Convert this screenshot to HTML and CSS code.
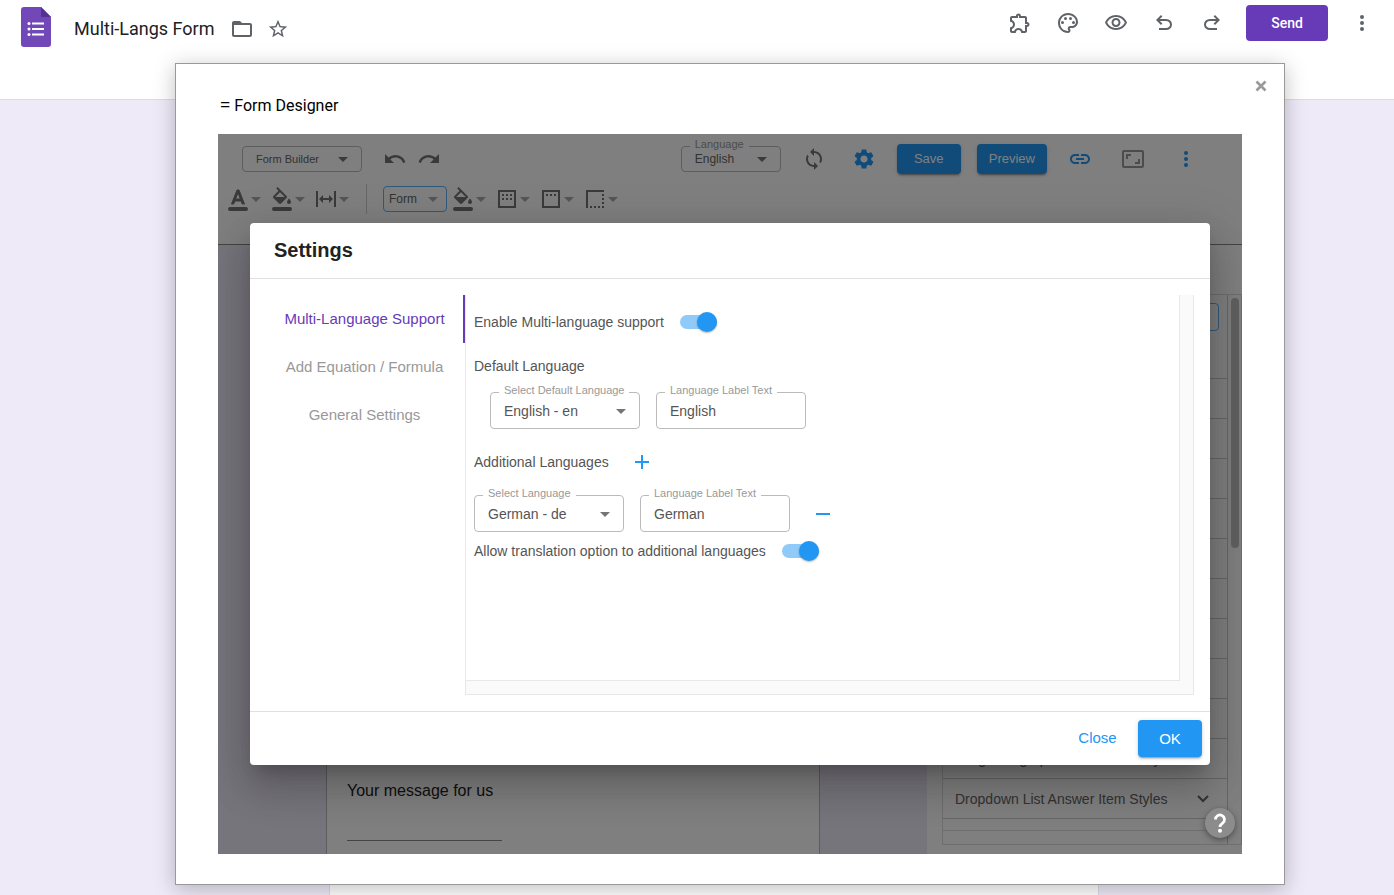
FILE: index.html
```
<!DOCTYPE html>
<html lang="en">
<head>
<meta charset="utf-8">
<title>Multi-Langs Form</title>
<link rel="stylesheet" href="styles.css">
</head>
<body>
<div class="page">
  <header class="topbar">
    <div class="topbar-left">
      <svg class="logo" width="30" height="40" viewBox="0 0 30 40"><path fill="#7248b9" d="M3 0h17l10 10v27a3 3 0 0 1-3 3H3a3 3 0 0 1-3-3V3a3 3 0 0 1 3-3z"/><path fill="#54318e" d="M20 0l10 10H20z"/><g fill="#fff"><circle cx="8" cy="16.500" r="1.500"/><circle cx="8" cy="22" r="1.500"/><circle cx="8" cy="27.500" r="1.500"/><path d="M11 15.500h12v2H11zM11 21h12v2H11zM11 26.500h12v2H11z"/></g></svg>
      <h1 class="doc-title">Multi-Langs Form</h1>
      <button class="plain title-icon" aria-label="Move to folder"><svg width="24" height="24" viewBox="0 0 24 24"><path d="M10 4H4c-1.100 0-2 .9-2 2v12c0 1.100.9 2 2 2h16c1.100 0 2-.9 2-2V8c0-1.100-.9-2-2-2h-8l-2-2zM4 8h16v10H4z" fill-rule="evenodd"/></svg></button>
      <button class="plain title-icon" aria-label="Star"><svg width="22" height="22" viewBox="0 0 24 24"><path d="M22 9.240l-7.190-.62L12 2 9.190 8.630 2 9.240l5.460 4.730L5.820 21 12 17.270 18.180 21l-1.630-7.030L22 9.240zM12 15.400l-3.760 2.270 1-4.280-3.320-2.880 4.380-.38L12 6.100l1.710 4.040 4.380.38-3.320 2.880 1 4.280L12 15.400z"/></svg></button>
    </div>
    <div class="topbar-right">
      <button class="plain top-icon" aria-label="Add-ons"><svg width="24" height="24" viewBox="0 0 24 24"><path d="M10.5 4.5c.28 0 .5.22.5.5v2h6v6h2c.28 0 .5.22.5.5s-.22.5-.5.5h-2v6h-2.120c-.68-1.750-2.390-3-4.380-3s-3.700 1.250-4.380 3H4v-2.120c1.750-.68 3-2.390 3-4.380 0-1.990-1.240-3.700-2.990-4.380L4 7h6V5c0-.28.22-.5.5-.5m0-2C9.120 2.500 8 3.620 8 5H4c-1.100 0-1.990.9-1.990 2v3.800h.29c1.490 0 2.700 1.210 2.700 2.700s-1.210 2.700-2.700 2.700H2V20c0 1.100.9 2 2 2h3.800v-.3c0-1.490 1.210-2.700 2.700-2.700s2.700 1.210 2.700 2.700v.3H17c1.100 0 2-.9 2-2v-4c1.380 0 2.500-1.120 2.500-2.500S20.380 11 19 11V7c0-1.100-.9-2-2-2h-4c0-1.380-1.120-2.500-2.500-2.500z"/></svg></button>
      <button class="plain top-icon" aria-label="Customize theme"><svg width="24" height="24" viewBox="0 0 24 24"><path d="M12 22C6.490 22 2 17.510 2 12S6.490 2 12 2s10 4.040 10 9c0 3.310-2.690 6-6 6h-1.770c-.28 0-.5.22-.5.5 0 .12.05.23.13.33.41.47.64 1.060.64 1.670 0 1.380-1.120 2.500-2.500 2.500zm0-18c-4.410 0-8 3.590-8 8s3.590 8 8 8c.28 0 .5-.22.5-.5 0-.16-.08-.28-.14-.35-.41-.46-.63-1.050-.63-1.650 0-1.380 1.120-2.500 2.500-2.500H16c2.210 0 4-1.790 4-4 0-3.860-3.590-7-8-7z"/><circle cx="6.500" cy="11.500" r="1.500"/><circle cx="9.500" cy="7.500" r="1.500"/><circle cx="14.500" cy="7.500" r="1.500"/><circle cx="17.500" cy="11.500" r="1.500"/></svg></button>
      <button class="plain top-icon" aria-label="Preview form"><svg width="24" height="24" viewBox="0 0 24 24"><path d="M12 6c3.790 0 7.170 2.130 8.820 5.500C19.170 14.870 15.790 17 12 17s-7.170-2.130-8.820-5.500C4.830 8.130 8.210 6 12 6m0-2C7 4 2.730 7.110 1 11.500 2.730 15.890 7 19 12 19s9.270-3.110 11-7.500C21.270 7.110 17 4 12 4zm0 5c1.380 0 2.500 1.120 2.500 2.500S13.380 14 12 14s-2.500-1.120-2.500-2.500S10.620 9 12 9m0-2c-2.480 0-4.500 2.020-4.500 4.500S9.520 16 12 16s4.500-2.020 4.500-4.500S14.480 7 12 7z"/></svg></button>
      <button class="plain top-icon" aria-label="Undo"><svg width="24" height="24" viewBox="0 0 24 24"><path d="M7 19v-2h7.100q1.575 0 2.738-1T18 13.500t-1.162-2.500T14.100 10H7.800l2.600 2.600L9 14 4 9l5-5 1.400 1.400L7.800 8h6.300q2.425 0 4.163 1.575T20 13.500t-1.737 3.925T14.100 19z"/></svg></button>
      <button class="plain top-icon" aria-label="Redo"><svg width="24" height="24" viewBox="0 0 24 24"><path transform="translate(24 0) scale(-1 1)" d="M7 19v-2h7.100q1.575 0 2.738-1T18 13.500t-1.162-2.500T14.100 10H7.800l2.600 2.600L9 14 4 9l5-5 1.400 1.400L7.800 8h6.300q2.425 0 4.163 1.575T20 13.500t-1.737 3.925T14.100 19z"/></svg></button>
      <button class="send">Send</button>
      <button class="plain top-icon" aria-label="More"><svg width="24" height="24" viewBox="0 0 24 24"><circle cx="12" cy="6" r="2"/><circle cx="12" cy="12" r="2"/><circle cx="12" cy="18" r="2"/></svg></button>
    </div>
  </header>
  <main class="form-area"><div class="form-sheet"></div></main>
</div>

<div class="overlay">
  <section class="window" aria-label="Form Designer">
    <div class="window-head">
      <h2 class="window-title"><span class="equals">=</span> Form Designer</h2>
      <button class="plain window-close" aria-label="Close window"><svg width="12" height="12" viewBox="0 0 12 12"><path d="M1.500 1.500l9 9M10.500 1.500l-9 9" stroke="#999" stroke-width="2.600"/></svg></button>
    </div>
    <div class="app">
      <div class="toolbar">
        <div class="tool-row main-row">
          <div class="select-box builder">
            <select aria-label="Mode"><option>Form Builder</option></select>
            <svg class="caret" width="10" height="5" viewBox="0 0 10 5"><path d="M0 0h10L5 5z"/></svg>
          </div>
          <div class="history">
            <button class="plain hist" aria-label="Undo"><svg width="24" height="24" viewBox="0 0 24 24"><path d="M12.500 8c-2.650 0-5.050.99-6.900 2.600L2 7v9h9l-3.620-3.620c1.390-1.160 3.160-1.880 5.120-1.880 3.540 0 6.550 2.310 7.600 5.500l2.370-.78C21.080 11.030 17.150 8 12.500 8z"/></svg></button>
            <button class="plain hist" aria-label="Redo"><svg width="24" height="24" viewBox="0 0 24 24"><path d="M18.400 10.600C16.550 8.990 14.150 8 11.500 8c-4.650 0-8.580 3.030-9.960 7.220L3.900 16c1.050-3.190 4.050-5.500 7.600-5.500 1.950 0 3.730.72 5.120 1.880L13 16h9V7l-3.600 3.600z"/></svg></button>
          </div>
          <div class="actions">
            <div class="select-box lang">
              <label class="float" for="lang">Language</label>
              <select id="lang"><option>English</option></select>
              <svg class="caret" width="10" height="5" viewBox="0 0 10 5"><path d="M0 0h10L5 5z"/></svg>
            </div>
            <button class="plain act" aria-label="Sync"><svg width="24" height="24" viewBox="0 0 24 24"><path d="M12 4V1L8 5l4 4V6c3.310 0 6 2.690 6 6 0 1.010-.25 1.970-.7 2.800l1.460 1.460C19.540 15.030 20 13.570 20 12c0-4.420-3.580-8-8-8zm0 14c-3.310 0-6-2.690-6-6 0-1.010.25-1.970.7-2.800L5.240 7.740C4.460 8.970 4 10.430 4 12c0 4.420 3.580 8 8 8v3l4-4-4-4v3z"/></svg></button>
            <button class="plain act blue" aria-label="Settings"><svg width="24" height="24" viewBox="0 0 24 24"><path d="M19.140 12.940c.04-.3.06-.61.06-.94 0-.32-.02-.64-.07-.94l2.030-1.580c.18-.14.23-.41.12-.61l-1.920-3.320c-.12-.22-.37-.29-.59-.22l-2.390.96c-.5-.38-1.030-.7-1.620-.94l-.36-2.540c-.04-.24-.24-.41-.48-.41h-3.840c-.24 0-.43.17-.47.41l-.36 2.540c-.59.24-1.130.57-1.620.94l-2.390-.96c-.22-.08-.47 0-.59.22L2.740 8.870c-.12.21-.08.47.12.61l2.030 1.580c-.05.3-.09.63-.09.94s.02.64.07.94l-2.030 1.580c-.18.14-.23.41-.12.61l1.920 3.320c.12.22.37.29.59.22l2.390-.96c.5.38 1.030.7 1.620.94l.36 2.540c.05.24.24.41.48.41h3.840c.24 0 .44-.17.47-.41l.36-2.540c.59-.24 1.130-.56 1.620-.94l2.390.96c.22.08.47 0 .59-.22l1.920-3.320c.12-.22.07-.47-.12-.61l-2.010-1.580zM12 15.600c-1.980 0-3.600-1.620-3.600-3.600s1.620-3.600 3.600-3.600 3.600 1.620 3.600 3.600-1.620 3.600-3.600 3.600z"/></svg></button>
            <button class="filled tool">Save</button>
            <button class="filled tool">Preview</button>
            <button class="plain act blue" aria-label="Link"><svg width="24" height="24" viewBox="0 0 24 24"><path d="M3.900 12c0-1.710 1.390-3.100 3.100-3.100h4V7H7c-2.760 0-5 2.240-5 5s2.240 5 5 5h4v-1.900H7c-1.710 0-3.100-1.390-3.100-3.100zM8 13h8v-2H8v2zm9-6h-4v1.900h4c1.710 0 3.100 1.390 3.100 3.100s-1.390 3.100-3.100 3.100h-4V17h4c2.760 0 5-2.240 5-5s-2.240-5-5-5z"/></svg></button>
            <button class="plain act wide" aria-label="Resize"><svg width="24" height="24" viewBox="0 0 24 24"><path d="M19 12h-2v3h-3v2h5v-5zM7 9h3V7H5v5h2V9zm14-6H3c-1.100 0-2 .9-2 2v14c0 1.100.9 2 2 2h18c1.100 0 2-.9 2-2V5c0-1.100-.9-2-2-2zm0 16.010H3V4.990h18v14.020z"/></svg></button>
            <button class="plain act blue" aria-label="More options"><svg width="24" height="24" viewBox="0 0 24 24"><circle cx="12" cy="6" r="2"/><circle cx="12" cy="12" r="2"/><circle cx="12" cy="18" r="2"/></svg></button>
          </div>
        </div>
        <div class="tool-row style-row">
          <button class="plain drop" aria-label="Text color"><svg width="24" height="24" viewBox="0 0 24 24"><path class="heavy" d="M11 3L5.500 17h2.250l1.120-3h6.250l1.120 3h2.250L13 3h-2zm-1.380 9L12 5.670 14.380 12H9.620z"/><rect x="2" y="20" width="20" height="4" rx="2"/></svg><svg class="mini" width="10" height="5" viewBox="0 0 10 5"><path d="M0 0h10L5 5z"/></svg></button>
          <button class="plain drop" aria-label="Background color"><svg width="24" height="24" viewBox="0 0 24 24"><path d="M16.560 8.940L7.620 0 6.210 1.410l2.380 2.380-5.150 5.150c-.59.59-.59 1.540 0 2.120l5.500 5.500c.29.29.68.44 1.060.44s.77-.15 1.060-.44l5.500-5.500c.59-.58.59-1.530 0-2.120zM5.210 10L10 5.210 14.790 10H5.210zM19 11.500s-2 2.170-2 3.500c0 1.100.9 2 2 2s2-.9 2-2c0-1.330-2-3.500-2-3.500z"/><rect x="2" y="20" width="20" height="4" rx="2"/></svg><svg class="mini" width="10" height="5" viewBox="0 0 10 5"><path d="M0 0h10L5 5z"/></svg></button>
          <button class="plain drop" aria-label="Width"><svg width="24" height="24" viewBox="0 0 24 24"><path d="M2 4h2v16H2zM20 4h2v16h-2zM5 12l4-4v3h6V8l4 4-4 4v-3H9v3z"/></svg><svg class="mini" width="10" height="5" viewBox="0 0 10 5"><path d="M0 0h10L5 5z"/></svg></button>
          <span class="divider"></span>
          <div class="select-box scope">
            <select aria-label="Scope"><option>Form</option></select>
            <svg class="caret" width="10" height="5" viewBox="0 0 10 5"><path d="M0 0h10L5 5z"/></svg>
          </div>
          <button class="plain drop" aria-label="Form fill"><svg width="24" height="24" viewBox="0 0 24 24"><path d="M16.560 8.940L7.620 0 6.210 1.410l2.380 2.380-5.150 5.150c-.59.59-.59 1.540 0 2.120l5.500 5.500c.29.29.68.44 1.060.44s.77-.15 1.060-.44l5.500-5.500c.59-.58.59-1.530 0-2.120zM5.210 10L10 5.210 14.790 10H5.210zM19 11.500s-2 2.170-2 3.500c0 1.100.9 2 2 2s2-.9 2-2c0-1.330-2-3.500-2-3.500z"/><rect x="2" y="20" width="20" height="4" rx="2"/></svg><svg class="mini" width="10" height="5" viewBox="0 0 10 5"><path d="M0 0h10L5 5z"/></svg></button>
          <button class="plain drop" aria-label="Padding"><svg width="24" height="24" viewBox="0 0 24 24"><path d="M3 3h18v18H3zM5 5v14h14V5z" fill-rule="evenodd"/><path d="M7 7h2v2H7zM11 7h2v2h-2zM15 7h2v2h-2zM7 11h2v2H7zM11 11h2v2h-2zM15 11h2v2h-2z"/></svg><svg class="mini" width="10" height="5" viewBox="0 0 10 5"><path d="M0 0h10L5 5z"/></svg></button>
          <button class="plain drop" aria-label="Header"><svg width="24" height="24" viewBox="0 0 24 24"><path d="M3 3h18v18H3zM5 5v14h14V5z" fill-rule="evenodd"/><path d="M7 7h2v2H7zM11 7h2v2h-2zM15 7h2v2h-2z"/></svg><svg class="mini" width="10" height="5" viewBox="0 0 10 5"><path d="M0 0h10L5 5z"/></svg></button>
          <button class="plain drop" aria-label="Border"><svg width="24" height="24" viewBox="0 0 24 24"><path d="M3 3h18v2H5v16H3zM7 19h2v2H7zM11 19h2v2h-2zM15 19h2v2h-2zM19 19h2v2h-2zM19 15h2v2h-2zM19 11h2v2h-2zM19 7h2v2h-2z"/></svg><svg class="mini" width="10" height="5" viewBox="0 0 10 5"><path d="M0 0h10L5 5z"/></svg></button>
        </div>
      </div>
      <div class="workspace">
        <div class="canvas">
          <div class="question">
            <label for="msg">Your message for us</label>
            <input id="msg" type="text">
          </div>
        </div>
        <aside class="panel">
          <div class="panel-box">
            <div class="style-list">
              <div class="style-first"><span class="style-select"></span></div>
              <div class="style-item"></div>
              <div class="style-item"></div>
              <div class="style-item"></div>
              <div class="style-item"></div>
              <div class="style-item"></div>
              <div class="style-item"></div>
              <div class="style-item"></div>
              <div class="style-item"></div>
              <div class="style-item"></div>
              <div class="style-item">Long Paragraph Answer Item Styles</div>
              <div class="style-item">Dropdown List Answer Item Styles<svg width="12" height="8" viewBox="0 0 12 8"><path d="M1 1l5 5 5-5" fill="none" stroke="#666" stroke-width="2"/></svg></div>
              <div class="style-end"></div>
            </div>
            <div class="scroll-track"><div class="scroll-thumb"></div></div>
          </div>
        </aside>
      </div>

      <div class="scrim">
        <section class="dialog" role="dialog" aria-labelledby="dlg-title">
          <h3 class="dialog-title" id="dlg-title">Settings</h3>
          <div class="dialog-body">
            <nav class="tabs">
              <button class="plain tab active">Multi-Language Support</button>
              <button class="plain tab">Add Equation / Formula</button>
              <button class="plain tab">General Settings</button>
            </nav>
            <div class="scroll-pane">
              <div class="settings">
                <div class="line"><label for="multi">Enable Multi-language support</label><input class="switch" id="multi" type="checkbox" checked></div>
                <h4 class="group-title">Default Language</h4>
                <div class="fields indent">
                  <div class="select-box field">
                    <label class="float" for="deflang">Select Default Language</label>
                    <select id="deflang"><option>English - en</option></select>
                    <svg class="caret" width="10" height="5" viewBox="0 0 10 5"><path d="M0 0h10L5 5z"/></svg>
                  </div>
                  <div class="field">
                    <label class="float" for="deflabel">Language Label Text</label>
                    <input id="deflabel" type="text" value="English">
                  </div>
                </div>
                <div class="line additional"><h4 class="add-title">Additional Languages</h4><button class="plain sign" aria-label="Add language"><svg width="24" height="24" viewBox="0 0 24 24"><path d="M19 13h-6v6h-2v-6H5v-2h6V5h2v6h6z"/></svg></button></div>
                <div class="fields">
                  <div class="select-box field">
                    <label class="float" for="addlang">Select Language</label>
                    <select id="addlang"><option>German - de</option></select>
                    <svg class="caret" width="10" height="5" viewBox="0 0 10 5"><path d="M0 0h10L5 5z"/></svg>
                  </div>
                  <div class="field">
                    <label class="float" for="addlabel">Language Label Text</label>
                    <input id="addlabel" type="text" value="German">
                  </div>
                  <button class="plain sign" aria-label="Remove language"><svg width="24" height="24" viewBox="0 0 24 24"><path d="M5 11h14v2H5z"/></svg></button>
                </div>
                <div class="line"><label for="allow">Allow translation option to additional languages</label><input class="switch" id="allow" type="checkbox" checked></div>
              </div>
            </div>
          </div>
          <footer class="dialog-foot">
            <button class="plain close-btn">Close</button>
            <button class="filled ok-btn">OK</button>
          </footer>
        </section>
        <button class="plain help" aria-label="Help"><svg width="30" height="30" viewBox="0 0 30 30"><path d="M10.500 11.500a4.500 4.500 0 1 1 7.300 3.500c-1.600 1.300-2.800 2-2.800 4" fill="none" stroke="#fff" stroke-width="2.800"/><circle cx="15" cy="22.700" r="2" fill="#fff"/></svg></button>
      </div>
    </div>
  </section>
</div>
</body>
</html>
```
FILE: styles.css
```
* { box-sizing: border-box; }

body {
  margin: 0;
  font-family: "Liberation Sans", Arial, sans-serif;
  font-size: 14px;
  color: #222;
}

h1, h2, h3, h4 { margin: 0; font-weight: 400; }
svg { display: block; flex: none; }
button, input, select { font-family: inherit; margin: 0; }
.plain { background: none; border: 0; padding: 0; cursor: pointer; }

.page {
  height: 100vh;
  min-height: 600px;
  display: flex;
  flex-direction: column;
  overflow: hidden;
}

/* Page header */
.topbar {
  height: 100px;
  flex: none;
  display: flex;
  justify-content: space-between;
  align-items: flex-start;
  border-bottom: 1px solid #dadce0;
  background: #fff;
}
.topbar-left { display: flex; align-items: center; padding: 7px 0 0 21px; }
.doc-title {
  margin: 4px 16px 0 23px;
  font-family: Roboto, sans-serif;
  font-size: 18px;
  line-height: 24px;
  color: #202124;
}
.title-icon { margin: 4px 13px 0 0; fill: #5f6368; }
.title-icon + .title-icon { margin-right: 0; }
.topbar-right { display: flex; align-items: center; padding: 5px 8px 0 0; }
.top-icon { width: 48px; display: flex; justify-content: center; fill: #5f6368; }
.send {
  width: 82px;
  height: 36px;
  margin: 0 10px;
  border: 0;
  border-radius: 4px;
  background: #673ab7;
  color: #fff;
  font: 500 14px Roboto, sans-serif;
}
.form-area {
  flex: 1;
  display: flex;
  background: #eeeaf8;
  padding: 12px 295px 0 329px;
}
.form-sheet { flex: 1; background: #fff; border: 1px solid #dadce0; border-bottom: 0; }

/* Add-on window */
.overlay {
  position: absolute;
  inset: 0;
  min-height: 895px;
  display: flex;
  padding: 63px 109px 10px 175px;
}
.window {
  flex: 1;
  min-width: 0;
  display: flex;
  flex-direction: column;
  padding: 0 42px 30px;
  border: 1px solid #999;
  background: #fff;
  box-shadow: 0 4px 20px rgba(0, 0, 0, .25);
}
.window-head {
  height: 70px;
  display: flex;
  align-items: flex-start;
  justify-content: space-between;
}
.window-title {
  padding: 32px 0 0 2px;
  font: 400 16px/20px Roboto, sans-serif;
  color: #000;
}
.equals { font-family: "Noto Sans", sans-serif; font-size: 18px; line-height: 16px; }
.window-close { margin: 16px -25px 0 0; }

.app {
  position: relative;
  flex: 1;
  display: flex;
  flex-direction: column;
  overflow: hidden;
  background: #fff;
}

/* Designer toolbar */
.toolbar { height: 111px; border-bottom: 1px solid #888; padding-top: 5px; flex: none; }
.tool-row { height: 40px; display: flex; align-items: center; fill: #757575; }
.main-row { padding: 0 39px 0 24px; }
.style-row { padding-left: 8px; }
.history { display: flex; gap: 10px; margin-left: 21px; }
.actions { display: flex; align-items: center; gap: 16px; margin-left: auto; }
.act { width: 34px; display: flex; justify-content: center; fill: #757575; }
.wide { width: 40px; fill: #999; }
.blue { fill: #2196f3; }

.select-box { position: relative; }
.select-box select {
  appearance: none;
  width: 100%;
  height: 100%;
  padding: 0 28px 0 13px;
  border: 1px solid #bbb;
  border-radius: 4px;
  background: transparent;
  color: #666;
  font-size: 12px;
}
.caret { position: absolute; right: 14px; top: 50%; margin-top: -2px; fill: #757575; pointer-events: none; }
.builder { width: 120px; height: 26px; }
.builder select { font-size: 11px; }
.lang { width: 100px; height: 26px; }
.scope { width: 64px; height: 26px; margin: 0 4px 0 16px; }
.scope select { border-color: #64b5f6; padding: 0 16px 0 5px; }
.scope .caret { right: 9px; fill: #aaa; }
.drop { width: 44px; display: flex; align-items: center; fill: #757575; }
.heavy { stroke: #757575; }
.mini { margin-left: 1px; fill: #aaa; }
.divider { width: 1px; height: 30px; margin-left: 8px; background: #ccc; }

.filled {
  border: 0;
  border-radius: 4px;
  background: #2196f3;
  color: #fff;
  box-shadow: 0 3px 1px -2px rgba(0, 0, 0, .2), 0 2px 2px rgba(0, 0, 0, .14), 0 1px 5px rgba(0, 0, 0, .12);
}
.tool { height: 30px; min-width: 64px; padding: 0 12px 1px; font-size: 13px; }

/* Designer workspace */
.workspace { flex: 1; min-height: 0; display: flex; }
.canvas { flex: 1; display: flex; padding: 0 107px 0 108px; background: #eeeaf8; }
.question {
  flex: 1;
  display: flex;
  flex-direction: column;
  justify-content: flex-end;
  padding: 0 20px 13px;
  border: solid #bbb;
  border-width: 0 1px;
  background: #fff;
  font-size: 16px;
  line-height: 20px;
}
.question input {
  width: 155px;
  height: 40px;
  padding: 0;
  border: 0;
  border-bottom: 1px solid #888;
  background: transparent;
}
.panel { width: 315px; padding: 49px 0 9px 15px; }
.panel-box {
  height: 100%;
  display: flex;
  border: 1px solid #ddd;
}
.style-list { flex: 1; border-right: 1px solid #ccc; }
.style-first {
  height: 84px;
  padding: 8px;
  border-bottom: 1px solid #ccc;
}
.style-select { display: block; height: 28px; border: 1px solid #64b5f6; border-radius: 4px; }
.style-item {
  height: 40px;
  display: flex;
  align-items: center;
  justify-content: space-between;
  padding: 0 18px 0 12px;
  border-bottom: 1px solid #ccc;
  color: #666;
}
.style-end { height: 12px; border-bottom: 1px solid #ddd; }
.scroll-track { width: 13px; padding: 3px 2px 3px 3px; }
.scroll-thumb { height: 250px; border-radius: 4px; background: #c1c1c1; }

/* Settings dialog */
.scrim {
  position: absolute;
  inset: 0;
  display: flex;
  align-items: center;
  padding: 0 32px;
  background: rgba(0, 0, 0, .5);
}
.dialog {
  flex: 1;
  border-radius: 4px;
  background: #fff;
  box-shadow: 0 11px 15px -7px rgba(0, 0, 0, .2), 0 24px 38px 3px rgba(0, 0, 0, .14), 0 9px 46px 8px rgba(0, 0, 0, .12);
}
.dialog-title {
  height: 56px;
  padding: 0 24px;
  border-bottom: 1px solid #e0e0e0;
  font-size: 20px;
  font-weight: 700;
  line-height: 55px;
}
.dialog-body { display: flex; padding: 16px; min-height: 432px; }
.tabs { width: 199px; display: flex; flex-direction: column; }
.tab { height: 48px; padding-bottom: 2px; border-right: 2px solid transparent; font-size: 15px; color: #999; }
.tab.active { border-color: #673ab7; color: #673ab7; }
.scroll-pane {
  flex: 1;
  display: flex;
  padding: 0 13px 13px 0;
  border: solid #e8e8e8;
  border-width: 0 1px 1px;
  background: #fafafa;
}
.settings {
  flex: 1;
  padding: 8px;
  border: solid #e8e8e8;
  border-width: 0 1px 1px 0;
  background: #fff;
  color: #555;
}
.line { height: 38px; display: flex; align-items: center; gap: 16px; }
.additional { margin: 14px 0; }
.group-title, .add-title { font-size: 14px; line-height: 20px; }
.group-title { margin: 15px 0 16px; }
.fields { display: flex; align-items: center; gap: 16px; }
.indent { padding-left: 16px; }
.field { position: relative; width: 150px; height: 37px; }
.field input,
.field select {
  display: block;
  width: 100%;
  height: 100%;
  padding: 0 13px;
  border: 1px solid #bbb;
  border-radius: 4px;
  background: transparent;
  color: #555;
  font-size: 14px;
}
.float {
  position: absolute;
  left: 9px;
  top: -9px;
  padding: 0 5px;
  background: #fff;
  color: #999;
  font-size: 11px;
  line-height: 14px;
  white-space: nowrap;
}
.sign { width: 34px; display: flex; justify-content: center; fill: #2196f3; }

.switch {
  appearance: none;
  position: relative;
  width: 37px;
  height: 14px;
  background: #90caf9;
  border-radius: 7px;
}
.switch::before {
  content: "";
  position: absolute;
  right: 0;
  top: -3px;
  width: 20px;
  height: 20px;
  border-radius: 50%;
  background: #2196f3;
  box-shadow: 0 1px 2px rgba(0, 0, 0, .3);
}
.dialog-foot {
  display: flex;
  justify-content: flex-end;
  gap: 8px;
  padding: 8px;
  border-top: 1px solid #e0e0e0;
}
.close-btn { width: 65px; height: 37px; padding-bottom: 2px; color: #2196f3; font-size: 15px; }
.ok-btn { width: 64px; height: 37px; padding-bottom: 2px; font-size: 15px; }

.help {
  position: absolute;
  right: 7px;
  bottom: 16px;
  width: 30px;
  height: 30px;
  border-radius: 50%;
  background: #8c8c8c;
  box-shadow: 0 2px 6px rgba(0, 0, 0, .4);
}
```
